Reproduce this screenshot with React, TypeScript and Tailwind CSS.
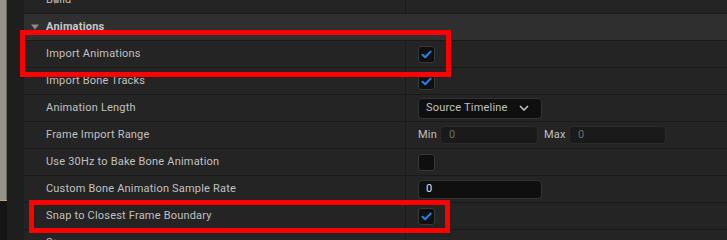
import { ReactNode } from 'react';

const font = { fontFamily: 'Roboto, "Liberation Sans", sans-serif' };

function Check() {
  return (
    <div className="w-[17px] h-[17px] rounded-[3px] bg-[#0f0f0f] border border-[#383838] flex items-center justify-center">
      <svg width="11" height="9" viewBox="0 0 11 9">
        <path d="M1.5 4.8 L4.2 7.3 L9.6 1.6" fill="none" stroke="#2383e8" strokeWidth="2" strokeLinecap="round" strokeLinejoin="round" />
      </svg>
    </div>
  );
}

function EmptyCheck() {
  return <div className="w-[17px] h-[17px] rounded-[3px] bg-[#0f0f0f] border border-[#383838]" />;
}

function Row({ label, children }: { label: ReactNode; children?: ReactNode }) {
  return (
    <div className="h-[27px] shrink-0 flex border-b border-[#1a1a1a] bg-[#242424]">
      <div className="w-[381px] flex items-center pl-[22px] text-[11px] tracking-[0.2px] text-[#c0c0c0] whitespace-nowrap">{label}</div>
      <div className="w-px bg-[#1a1a1a]" />
      <div className="flex-1 flex items-center pl-[12px]">{children}</div>
    </div>
  );
}

function Tri({ open }: { open?: boolean }) {
  return (
    <svg width="8" height="8" viewBox="0 0 8 8" className="absolute left-[7px]">
      {open ? <path d="M0 1.5 H8 L4 6.5 Z" fill="#8a8a8a" /> : <path d="M1.5 0 V8 L6.5 4 Z" fill="#8a8a8a" />}
    </svg>
  );
}

export default function App() {
  return (
    <div className="relative w-[727px] h-[240px] overflow-hidden flex bg-[#1e1e1e]" style={font}>
      {/* viewport edge */}
      <div className="w-[7px] flex flex-col">
        <div className="h-[200px] bg-[#97918b] border-r border-[#6d6a66]" />
        <div className="h-px bg-[#c9a66b]" />
        <div className="flex-1 bg-[#151515]" />
      </div>
      <div className="w-[17px] bg-[#1e1e1e]" />
      <div className="flex-1 flex flex-col mt-[-13px]">
        <Row
          label={
            <div className="relative flex items-center w-full">
              <Tri />
              <span>Build</span>
            </div>
          }
        />
        <div className="h-[27px] shrink-0 flex items-center border-b border-[#1a1a1a] bg-[#2f2f2f] pl-[22px] relative">
          <Tri open />
          <span className="text-[11px] tracking-[0.2px] font-bold text-[#c8c8c8]">Animations</span>
        </div>
        <Row label="Import Animations">
          <Check />
        </Row>
        <Row label="Import Bone Tracks">
          <Check />
        </Row>
        <Row label="Animation Length">
          <div className="w-[124px] h-[21px] rounded-[4px] bg-[#0f0f0f] border border-[#333] flex items-center justify-between pl-[7px] pr-[12px] text-[11px] tracking-[0.2px] text-[#c0c0c0]">
            <span>Source Timeline</span>
            <svg width="10" height="6" viewBox="0 0 10 6">
              <path d="M1 1 L5 5 L9 1" fill="none" stroke="#c8c8c8" strokeWidth="1.5" />
            </svg>
          </div>
        </Row>
        <Row label="Frame Import Range">
          <div className="flex items-center text-[11px] tracking-[0.2px] text-[#c0c0c0]">
            <span className="w-[22px]">Min</span>
            <div className="w-[98px] h-[18px] rounded-[4px] bg-[#1a1a1a] border border-[#2a2a2a] flex items-center pl-[8px] text-[#6a6a6a]">0</div>
            <span className="w-[31px] pl-[6px]">Max</span>
            <div className="w-[97px] h-[18px] rounded-[4px] bg-[#1a1a1a] border border-[#2a2a2a] flex items-center pl-[8px] text-[#6a6a6a]">0</div>
          </div>
        </Row>
        <Row label="Use 30Hz to Bake Bone Animation">
          <EmptyCheck />
        </Row>
        <Row label="Custom Bone Animation Sample Rate">
          <div className="w-[124px] h-[19px] rounded-[4px] bg-[#0f0f0f] border border-[#333] flex items-center pl-[7px] text-[11px] text-[#e0e0e0]">0</div>
        </Row>
        <Row label="Snap to Closest Frame Boundary">
          <Check />
        </Row>
        <Row
          label={
            <div className="relative flex items-center w-full">
              <Tri />
              <span>Scene</span>
            </div>
          }
        />
      </div>
      {/* highlight boxes */}
      <div className="absolute left-[20px] top-[30px] w-[431px] h-[47px] border-[5px] border-[#ff0000]" />
      <div className="absolute left-[29px] top-[200px] w-[421px] h-[33px] border-[5px] border-[#ff0000]" />
    </div>
  );
}
